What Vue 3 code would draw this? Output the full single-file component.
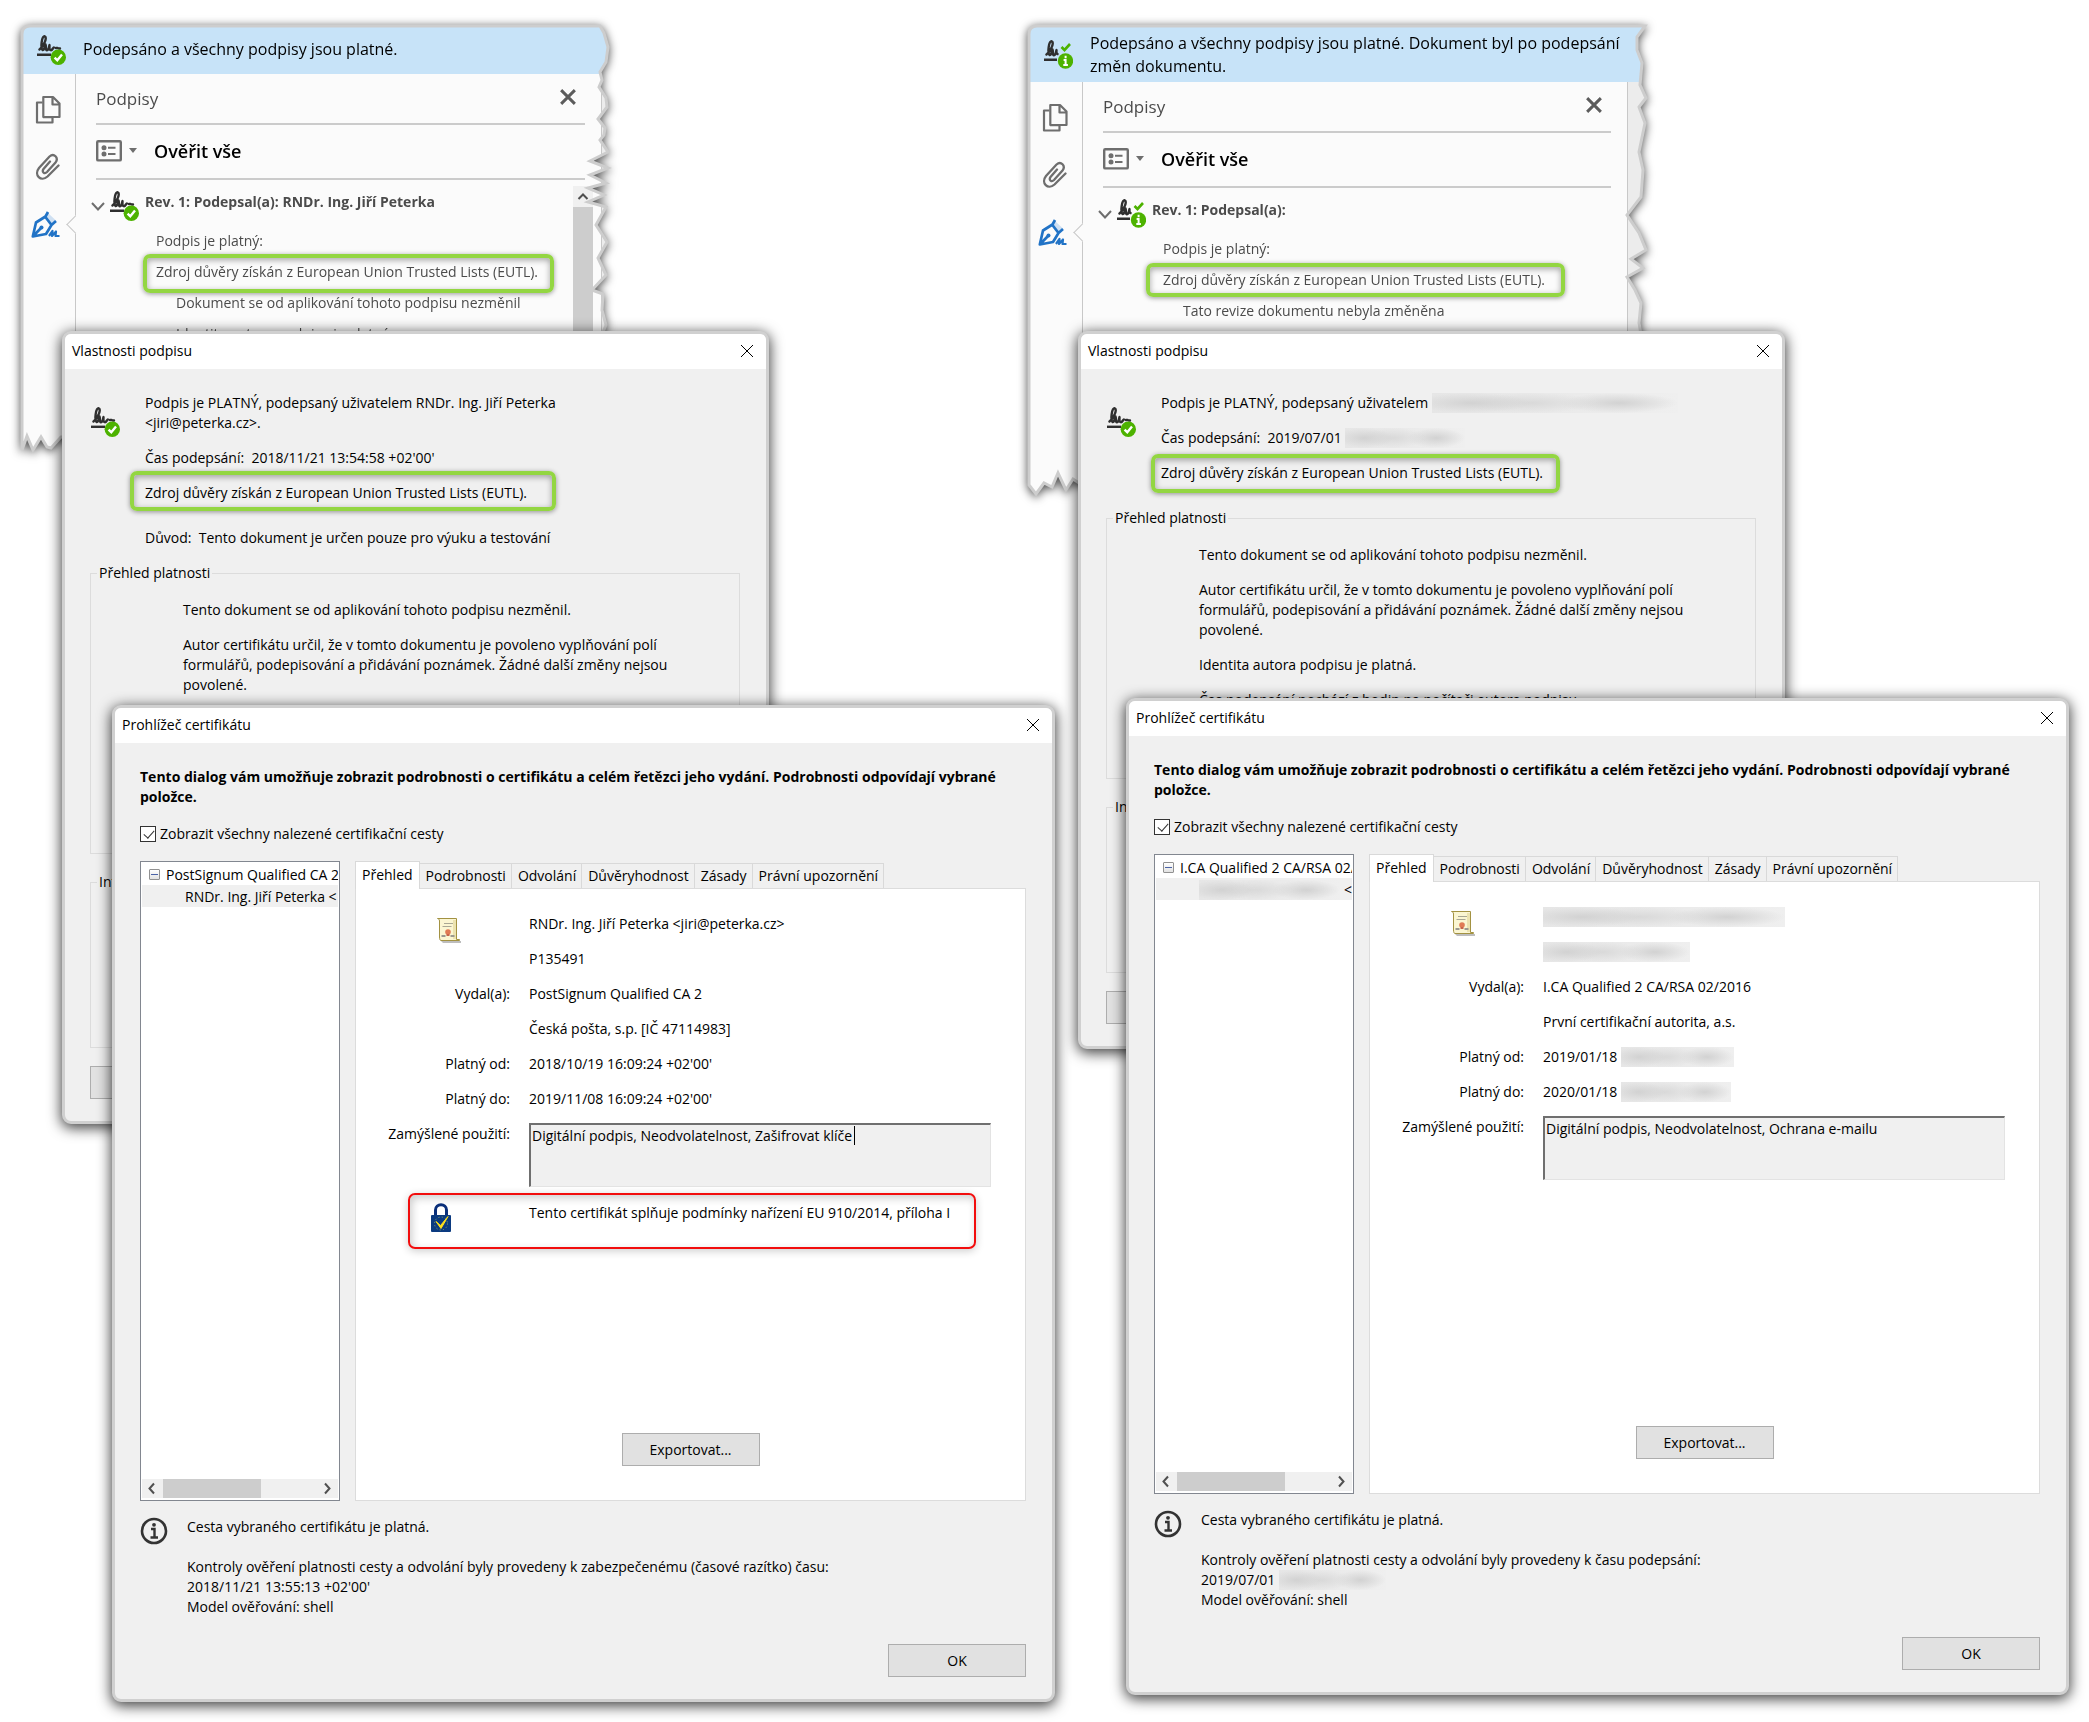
<template>
  <main class="desktop">
    <svg class="icon-defs" aria-hidden="true">
      <symbol id="ico-pen" viewBox="0 0 30 30">
        <path d="M3.500 14.500 C8 11 11.500 2 8.800 1.300 C5.500 1 4.500 13 6.500 15 C8 16 9 11 9.500 9.500 C10.500 11.500 9 15 11 15.200 C13 15 13 11 13.500 10 C13.500 12.500 13 15.200 15 15.200 C17 15 17 12 18 12.500 M20 13 h1.500 M23 13.500 h1" fill="none" stroke="#2f2f2f" stroke-width="2.400" stroke-linecap="round" stroke-linejoin="round" />
        <path d="M1 19.800 H15" stroke="#2f2f2f" stroke-width="2.400" />
      </symbol>
      <symbol id="ico-signed" viewBox="0 0 30 30">
        <use href="#ico-pen" width="30" height="30" />
        <circle cx="22.300" cy="22.300" r="7.700" fill="#4db200" />
        <path d="M18.600 22.600 L21.300 25.300 L26 19.600" fill="none" stroke="#fff" stroke-width="2.400" />
      </symbol>
      <symbol id="ico-signed-info" viewBox="0 0 30 30">
        <path d="M3.500 14.500 C8 11 11.500 2 8.800 1.300 C5.500 1 4.500 13 6.500 15 C8 16 9 11 9.500 9.500 C10.500 11.500 9 15 11 15.200 C13 15 13 11 13.500 10 C13.500 12 13 13.500 14.500 14" fill="none" stroke="#2f2f2f" stroke-width="2.400" stroke-linecap="round" stroke-linejoin="round" />
        <path d="M1 19.800 H14" stroke="#2f2f2f" stroke-width="2.400" />
        <path d="M18.500 7 L21.500 10 L27 4" fill="none" stroke="#4db200" stroke-width="2.600" />
        <circle cx="22.500" cy="21" r="7.700" fill="#4db200" />
        <path d="M22.600 15.800 v2.400 M20.600 20 h2 v5 M20.300 25 h4.600" fill="none" stroke="#fff" stroke-width="2" />
      </symbol>
      <symbol id="ico-pages" viewBox="0 0 26 30">
        <path d="M8 24 H17 V22 H8 Z" fill="#dadada" />
        <path d="M7.500 7.500 H2 V27.500 H17.500 V23" fill="none" stroke="#6e6e6e" stroke-width="2.200" stroke-linejoin="round" />
        <path d="M8.300 2 H18 L24.500 8.500 V22 H8.300 Z M17.500 2.500 V9.500 H24" fill="none" stroke="#6e6e6e" stroke-width="2.200" stroke-linejoin="round" />
      </symbol>
      <symbol id="ico-clip" viewBox="0 0 26 28">
        <path d="M15 8.500 L8.500 16 C6.500 19 9.500 21.500 12 19 L20.500 9.500 C24 5 19 -0.500 14.500 3.500 L4 15 C-1.500 22 6 29.500 12.500 23.500 L23.500 12.500" fill="none" stroke="#6e6e6e" stroke-width="2.300" stroke-linecap="round" />
      </symbol>
      <symbol id="ico-nib" viewBox="0 0 30 28">
        <path d="M17 2 L25 9.500 L21 13 L14 5 Z" fill="#cfe0f2" />
        <path d="M17 1 L14.500 5.500 L5 11.500 L1.800 25.500 L15 23 L20.500 14 L25 10 M14 5.500 L20.500 14 M1.800 25.500 L10 17" fill="none" stroke="#2173c6" stroke-width="2.700" stroke-linejoin="round" />
        <circle cx="10.500" cy="16.500" r="2" fill="#2173c6" />
        <path d="M18 25 L21.500 20 L21 25 L25 20.500 L24.500 25 H28.500" fill="none" stroke="#2173c6" stroke-width="2.200" stroke-linejoin="round" />
      </symbol>
      <symbol id="ico-list" viewBox="0 0 26 22">
        <rect x="1.200" y="1.200" width="23.600" height="19.200" rx="1" fill="none" stroke="#6e6e6e" stroke-width="2.400" />
        <circle cx="8" cy="7.700" r="2.500" fill="#6e6e6e" />
        <circle cx="8" cy="14" r="2.500" fill="#6e6e6e" />
        <path d="M12 7.700 h7.500 M12 14 h7.500" stroke="#6e6e6e" stroke-width="2" />
      </symbol>
      <symbol id="ico-close" viewBox="0 0 14 14">
        <path d="M1 1 L13 13 M13 1 L1 13" fill="none" stroke="currentColor" />
      </symbol>
      <symbol id="ico-cert" viewBox="0 0 26 28">
        <path d="M5 24 H25 V26 H7 Z" fill="#bdbdbd" />
        <path d="M1.500 1.500 H20.500 V22.500 H23.500 V23.500 H5 C4 23.500 3.500 22 3.500 20 V4 C3.500 2.500 2.500 1.500 1.500 1.500 Z" fill="#fbf6d2" stroke="#a39242" />
        <path d="M17 3 H20 V22 H17 Z" fill="#ece3b0" />
        <path d="M8 6.500 h9 M6.500 9.500 h9" stroke="#a9a794" />
        <path d="M5.500 19 h4 M14.500 19 h4" stroke="#9c9a90" stroke-width="2" />
        <circle cx="12" cy="15" r="2.800" fill="#e07b55" />
        <path d="M10.500 17 v2 h3 v-2" fill="#c8644a" />
      </symbol>
      <symbol id="ico-lock" viewBox="0 0 22 30">
        <path d="M5.500 12 V7 C5.500 0 16.500 0 16.500 7 V12" fill="none" stroke="#0a2f7a" stroke-width="3" />
        <rect x="1" y="12" width="20" height="17" rx="1" fill="#0b3a80" />
        <circle cx="11" cy="20.500" r="6.500" fill="none" stroke="#7f9a6a" stroke-dasharray="1.200 2.200" />
        <path d="M6 18.500 L10.500 22.500 L18 13.500 L11 25.500 Z" fill="#ffe11a" stroke="#ffe11a" />
      </symbol>
      <symbol id="ico-info" viewBox="0 0 28 28">
        <circle cx="14" cy="14" r="12" fill="none" stroke="#333" stroke-width="2.600" />
        <circle cx="14" cy="7.800" r="1.900" fill="#333" />
        <path d="M11 12 h3.500 v8.500 M10.500 20.500 h7.500" fill="none" stroke="#333" stroke-width="2.400" />
      </symbol>
    </svg>

    <template v-for="scene in scenes" :key="scene.id">
      <!-- panel podpisů s natrženým okrajem -->
      <section class="panel" :style="place(scene.panel)">
        <div class="panel-content" :style="{ clipPath: `path('${scene.panel.outline}')` }">
          <header class="banner" :class="{ tall: scene.panel.banner.length > 1 }">
            <svg class="ico-sign"><use :href="scene.panel.icon" /></svg>
            <p><span v-for="line in scene.panel.banner" :key="line">{{ line }}</span></p>
          </header>
          <div class="panel-main">
            <nav class="rail">
              <button type="button" aria-label="Stránky"><svg width="26" height="30"><use href="#ico-pages" /></svg></button>
              <button type="button" aria-label="Přílohy"><svg width="26" height="28"><use href="#ico-clip" /></svg></button>
              <button type="button" aria-label="Podpisy" class="active"><svg width="30" height="28"><use href="#ico-nib" /></svg></button>
            </nav>
            <div class="signatures" :style="{ width: scene.panel.bodyWidth + 'px' }">
              <div class="sig-head">
                <h2>Podpisy</h2>
                <button type="button" aria-label="Zavřít"><svg width="16" height="16"><use href="#ico-close" stroke-width="2.600" /></svg></button>
              </div>
              <div class="sig-tools">
                <button type="button" class="list-btn" aria-label="Možnosti">
                  <svg width="26" height="22"><use href="#ico-list" /></svg><i class="caret"></i>
                </button>
                <button type="button" class="verify">Ověřit vše</button>
              </div>
              <div class="revision">
                <svg class="chevron" width="14" height="9" viewBox="0 0 14 9"><path d="M1 1 L7 7.500 L13 1" fill="none" stroke="#6e6e6e" stroke-width="2" /></svg>
                <svg class="ico-sign"><use :href="scene.panel.icon" /></svg>
                <strong>{{ scene.panel.revision }}</strong>
              </div>
              <p class="sig-line">Podpis je platný:</p>
              <p class="sig-line marked">{{ trustText }}<i class="mark" :style="place(scene.panel.mark)"></i></p>
              <p v-for="line in scene.panel.details" :key="line" class="sig-line nested">{{ line }}</p>
              <div v-if="scene.panel.scrollbar" class="vscroll">
                <svg width="20" height="21" viewBox="0 0 20 21"><path d="M5.500 13 L10 8.500 L14.500 13" fill="none" stroke="#505050" stroke-width="2" /></svg>
              </div>
            </div>
            <div class="splitter"></div>
          </div>
        </div>
        <svg class="outline"><path :d="scene.panel.outline" /></svg>
      </section>

      <!-- vlastnosti podpisu -->
      <section class="window" :style="place(scene.props)">
        <header class="titlebar">
          <h2>Vlastnosti podpisu</h2>
          <button type="button" aria-label="Zavřít"><svg width="14" height="14"><use href="#ico-close" /></svg></button>
        </header>
        <div class="window-body">
          <div class="summary">
            <svg class="ico-sign"><use href="#ico-signed" /></svg>
            <div>
              <p>Podpis je PLATNÝ, podepsaný uživatelem <template v-if="scene.props.user">{{ scene.props.user }}<br />{{ scene.props.mail }}</template><i v-else class="smudge" style="width: 246px"></i></p>
              <p>Čas podepsání:&nbsp; {{ scene.props.time }} <i v-if="!scene.props.user" class="smudge" style="width: 120px"></i></p>
              <p class="marked trust">{{ trustText }}<i class="mark" :style="place(scene.props.mark)"></i></p>
              <p v-if="scene.props.reason">Důvod:&nbsp; {{ scene.props.reason }}</p>
            </div>
          </div>
          <fieldset class="overview">
            <legend>Přehled platnosti</legend>
            <p v-for="line in scene.props.overview" :key="line">{{ line }}</p>
          </fieldset>
          <fieldset class="signer">
            <legend>Informace</legend>
          </fieldset>
          <button type="button" class="btn details">Detaily podpisu...</button>
        </div>
      </section>

      <!-- prohlížeč certifikátu -->
      <section class="window" :style="place(scene.viewer)">
        <header class="titlebar">
          <h2>Prohlížeč certifikátu</h2>
          <button type="button" aria-label="Zavřít"><svg width="14" height="14"><use href="#ico-close" /></svg></button>
        </header>
        <div class="window-body">
          <p class="intro">Tento dialog vám umožňuje zobrazit podrobnosti o certifikátu a celém řetězci jeho vydání. Podrobnosti odpovídají vybrané položce.</p>
          <label class="check"><input v-model="scene.showAll" type="checkbox" />Zobrazit všechny nalezené certifikační cesty</label>

          <div class="columns">
            <div class="tree">
              <div class="tree-row"><i class="minus"></i>{{ scene.viewer.root }}</div>
              <div class="tree-row selected">
                <template v-if="scene.viewer.leaf">{{ scene.viewer.leaf }}</template>
                <i v-else class="smudge" style="width: 148px"></i>&nbsp;&lt;
              </div>
              <div class="hscroll">
                <svg width="21" height="19" viewBox="0 0 21 19"><path d="M12 4.500 L7.500 9.500 L12 14.500" fill="none" stroke="#505050" stroke-width="2" /></svg>
                <i class="thumb" :style="{ width: scene.viewer.thumb + 'px' }"></i>
                <svg width="21" height="19" viewBox="0 0 21 19"><path d="M8 4.500 L12.500 9.500 L8 14.500" fill="none" stroke="#505050" stroke-width="2" /></svg>
              </div>
            </div>

            <div class="tabs">
              <div class="tablist" role="tablist">
                <button v-for="tab in tabs" :key="tab" type="button" role="tab" :class="{ active: tab === scene.tab }" @click="scene.tab = tab">{{ tab }}</button>
              </div>
              <div class="tabpanel" role="tabpanel">
                <dl>
                  <template v-for="(row, i) in scene.viewer.rows" :key="i">
                    <dt><svg v-if="i === 0" class="ico-cert"><use href="#ico-cert" /></svg>{{ row.label }}</dt>
                    <dd>{{ row.value }} <i v-if="row.smudge" class="smudge" :style="{ width: row.smudge + 'px' }"></i></dd>
                  </template>
                  <dt><label :for="'usage-' + scene.id">Zamýšlené použití:</label></dt>
                  <dd class="usage">
                    <textarea :id="'usage-' + scene.id" readonly :value="scene.viewer.usage"></textarea>
                    <i v-if="scene.viewer.cursor" class="cursor" :style="{ left: scene.viewer.cursor + 'px' }"></i>
                  </dd>
                </dl>
                <div v-if="scene.viewer.qualified" class="qualified">
                  <svg width="22" height="30"><use href="#ico-lock" /></svg>
                  <span>{{ scene.viewer.qualified }}</span>
                </div>
                <button type="button" class="btn export">Exportovat...</button>
              </div>
            </div>
          </div>

          <div class="status">
            <svg width="28" height="28"><use href="#ico-info" /></svg>
            <div>
              <p>Cesta vybraného certifikátu je platná.</p>
              <p>{{ scene.viewer.check }}<br />{{ scene.viewer.checkTime }} <i v-if="!scene.viewer.leaf" class="smudge" style="width: 107px"></i><br />Model ověřování: shell</p>
            </div>
          </div>
          <button type="button" class="btn ok">OK</button>
        </div>
      </section>
    </template>
  </main>
</template>

<script setup>
import { reactive } from 'vue';

const trustText = 'Zdroj důvěry získán z European Union Trusted Lists (EUTL).';
const tabs = ['Přehled', 'Podrobnosti', 'Odvolání', 'Důvěryhodnost', 'Zásady', 'Právní upozornění'];

const unchanged = 'Tento dokument se od aplikování tohoto podpisu nezměnil.';
const allowed = 'Autor certifikátu určil, že v tomto dokumentu je povoleno vyplňování polí formulářů, podepisování a přidávání poznámek. Žádné další změny nejsou povolené.';

const scenes = reactive([
  {
    id: 'left',
    showAll: true,
    tab: 'Přehled',
    panel: {
      left: 20, top: 24, width: 592, height: 432,
      bodyWidth: 489,
      icon: '#ico-signed',
      banner: ['Podepsáno a všechny podpisy jsou platné.'],
      revision: 'Rev. 1: Podepsal(a): RNDr. Ing. Jiří Peterka',
      details: ['Dokument se od aplikování tohoto podpisu nezměnil', 'Identita autora podpisu je platná'],
      scrollbar: true,
      mark: { left: -13, top: -8, width: 411, height: 39 },
      outline: 'M2 10 Q2 2 10 2 L580 2 L584 9 L588 23 L586 38 L580 48 L582 56 L579 63 L586 74 L587 83 L578 95 L585 104 L584 111 L580 116 L588 128 L570 137 L588 144 L570 151 L586 159 L568 164 L584 171 L568 178 L586 183 L576 201 L587 218 L578 234 L586 251 L572 266 L583 270 L582 286 L586 301 L580 316 L580 410 L41 413 L31 424 L27 423 L21 413 L13 426 L7 412 L2 426 Z'
    },
    props: {
      left: 62, top: 331, width: 707, height: 793,
      user: 'RNDr. Ing. Jiří Peterka',
      mail: '<jiri@peterka.cz>.',
      time: "2018/11/21 13:54:58 +02'00'",
      reason: 'Tento dokument je určen pouze pro výuku a testování',
      overview: [unchanged, allowed],
      mark: { left: -15, top: -12, width: 426, height: 40 }
    },
    viewer: {
      left: 112, top: 705, width: 943, height: 997,
      root: 'PostSignum Qualified CA 2',
      leaf: 'RNDr. Ing. Jiří Peterka',
      thumb: 98,
      rows: [
        { value: 'RNDr. Ing. Jiří Peterka <jiri@peterka.cz>' },
        { value: 'P135491' },
        { label: 'Vydal(a):', value: 'PostSignum Qualified CA 2' },
        { value: 'Česká pošta, s.p. [IČ 47114983]' },
        { label: 'Platný od:', value: "2018/10/19 16:09:24 +02'00'" },
        { label: 'Platný do:', value: "2019/11/08 16:09:24 +02'00'" }
      ],
      usage: 'Digitální podpis, Neodvolatelnost, Zašifrovat klíče',
      cursor: 325,
      qualified: 'Tento certifikát splňuje podmínky nařízení EU 910/2014, příloha I',
      check: 'Kontroly ověření platnosti cesty a odvolání byly provedeny k zabezpečenému (časové razítko) času:',
      checkTime: "2018/11/21 13:55:13 +02'00'"
    }
  },
  {
    id: 'right',
    showAll: true,
    tab: 'Přehled',
    panel: {
      left: 1027, top: 24, width: 624, height: 476,
      bodyWidth: 508,
      icon: '#ico-signed-info',
      banner: ['Podepsáno a všechny podpisy jsou platné. Dokument byl po podepsání', 'změn dokumentu.'],
      revision: 'Rev. 1: Podepsal(a):',
      details: ['Tato revize dokumentu nebyla změněna'],
      mark: { left: -17, top: -7, width: 419, height: 34 },
      outline: 'M2 10 Q2 2 10 2 L618 2 L610 13 L610 26 L615 39 L613 61 L619 74 L612 83 L618 99 L612 128 L616 146 L614 173 L600 191 L612 209 L619 226 L604 235 L616 244 L600 253 L608 266 L614 279 L612 299 L615 316 L614 450 L52 459 L46 455 L39 466 L31 449 L25 463 L17 459 L9 470 L2 461 Z'
    },
    props: {
      left: 1078, top: 331, width: 707, height: 718,
      time: '2019/07/01',
      overview: [unchanged, allowed, 'Identita autora podpisu je platná.', 'Čas podepsání pochází z hodin na počítači autora podpisu.'],
      mark: { left: -10, top: -9, width: 409, height: 39 }
    },
    viewer: {
      left: 1126, top: 698, width: 943, height: 997,
      root: 'I.CA Qualified 2 CA/RSA 02/2016',
      thumb: 108,
      rows: [
        { smudge: 242 },
        { smudge: 147 },
        { label: 'Vydal(a):', value: 'I.CA Qualified 2 CA/RSA 02/2016' },
        { value: 'První certifikační autorita, a.s.' },
        { label: 'Platný od:', value: '2019/01/18', smudge: 113 },
        { label: 'Platný do:', value: '2020/01/18', smudge: 110 }
      ],
      usage: 'Digitální podpis, Neodvolatelnost, Ochrana e-mailu',
      check: 'Kontroly ověření platnosti cesty a odvolání byly provedeny k času podepsání:',
      checkTime: '2019/07/01'
    }
  }
]);

const place = ({ left, top, width, height }) => ({
  left: left + 'px',
  top: top + 'px',
  width: width + 'px',
  height: height + 'px'
});
</script>

<style>
body {
  margin: 0;
  background: #fff;
}
</style>

<style scoped>
.desktop {
  position: relative;
  min-height: 100vh;
  overflow: hidden;
  font-family: "Open Sans", "Noto Sans", sans-serif;
  font-size: 14px;
  line-height: 20px;
  color: #000;
}

.desktop * {
  box-sizing: border-box;
}

p,
h2,
dl,
dd {
  margin: 0;
}

h2 {
  font-weight: 400;
}

svg {
  display: block;
  flex: none;
}

button {
  padding: 0;
  border: 0;
  background: none;
  font: inherit;
  color: inherit;
}

.icon-defs {
  position: absolute;
  width: 0;
  height: 0;
}

.ico-sign {
  width: 30px;
  height: 30px;
}

.marked {
  position: relative;
}

.mark {
  position: absolute;
  border: 4px solid #93d642;
  border-radius: 7px;
  box-shadow: 0 1px 5px rgba(0, 0, 0, 0.4), inset 0 2px 6px rgba(0, 0, 0, 0.35);
}

/* rozmazané osobní údaje */
.smudge {
  display: inline-block;
  height: 20px;
  vertical-align: top;
  background:
    radial-gradient(ellipse 24% 50% at 16% 50%, #d2d2d2, transparent),
    radial-gradient(ellipse 28% 50% at 40% 50%, #d9d9d9, transparent),
    radial-gradient(ellipse 24% 50% at 76% 50%, #d2d2d2, transparent),
    linear-gradient(90deg, #e6e6e6, #ebebeb 60%, #efefef);
}

/* panel podpisů */
.panel {
  position: absolute;
  filter: drop-shadow(0 2px 5px rgba(0, 0, 0, 0.7));
}

.panel-content {
  display: flex;
  flex-direction: column;
  height: 100%;
  padding: 3px;
  background: #fbfbfb;
}

.outline {
  position: absolute;
  inset: 0;
  width: 100%;
  height: 100%;
}

.outline path {
  fill: none;
  stroke: #cdcdcd;
  stroke-width: 3px;
}

.banner {
  display: flex;
  align-items: center;
  gap: 17px;
  flex: none;
  height: 47px;
  padding: 0 0 2px 13px;
  background: #c7e3f8;
  font-size: 16px;
  line-height: 23px;
}

.banner.tall {
  height: 55px;
  padding-bottom: 0;
}

.banner span {
  display: block;
  white-space: nowrap;
}

.panel-main {
  display: flex;
  flex: 1;
}

.rail {
  display: flex;
  flex-direction: column;
  gap: 28px;
  width: 53px;
  padding: 21px 0 0 12px;
  border-right: 1px solid #c8c8c8;
}

.rail button {
  position: relative;
  width: 30px;
}

.rail .active {
  width: 34px;
  margin: 2px 0 0 -4px;
}

.rail .active::after {
  content: "";
  position: absolute;
  top: 7px;
  right: -17px;
  width: 12px;
  height: 12px;
  border-left: 1px solid #c8c8c8;
  border-bottom: 1px solid #c8c8c8;
  background: #fbfbfb;
  transform: rotate(45deg);
}

.signatures {
  position: relative;
  flex: none;
  margin-left: 20px;
  color: #4b4b4b;
}

.sig-head {
  display: flex;
  align-items: center;
  justify-content: space-between;
  height: 51px;
  padding-right: 9px;
  border-bottom: 2px solid #cbcbcb;
}

.sig-head h2 {
  font-size: 17px;
}

.sig-head button {
  padding-bottom: 4px;
  color: #5c5c5c;
}

.sig-tools {
  display: flex;
  align-items: center;
  gap: 17px;
  height: 55px;
  padding-bottom: 2px;
  border-bottom: 2px solid #cbcbcb;
}

.list-btn {
  display: flex;
  align-items: center;
  gap: 7px;
}

.caret {
  border: 4px solid transparent;
  border-top: 5px solid #6e6e6e;
  border-bottom: 0;
}

.verify {
  font-size: 18px;
  font-weight: 600;
  color: #000;
}

.revision {
  display: flex;
  height: 51px;
  padding-top: 11px;
}

.revision .chevron {
  margin: 11px 4px 0 -5px;
}

.revision strong {
  margin: 1px 0 0 6px;
  white-space: nowrap;
}

.sig-line {
  margin: 0 0 11px 60px;
  white-space: nowrap;
}

.sig-line.nested {
  margin-left: 80px;
}

.vscroll {
  position: absolute;
  top: 112px;
  right: -8px;
  bottom: 0;
  width: 20px;
  background: linear-gradient(#f0f0f0 21px, #cdcdcd 21px);
}

.splitter {
  flex: 1;
  margin-left: 16px;
  border-left: 1px solid #c8c8c8;
  background: #ececec;
}

/* dialogová okna */
.window {
  position: absolute;
  display: flex;
  flex-direction: column;
  border: 3px solid #d0d0d0;
  border-radius: 9px;
  background: #f0f0f0;
  box-shadow: 0 3px 14px 1px rgba(0, 0, 0, 0.75);
}

.titlebar {
  display: flex;
  align-items: center;
  justify-content: space-between;
  flex: none;
  height: 35px;
  padding: 0 12px 2px 7px;
  border-radius: 6px 6px 0 0;
  background: #fff;
}

.titlebar h2 {
  font-size: 14px;
}

.window-body {
  display: flex;
  flex-direction: column;
  flex: 1;
  padding: 24px 26px 22px 25px;
}

.btn {
  width: 138px;
  height: 33px;
  border: 1px solid #adadad;
  background: #e1e1e1;
}

.btn.details {
  width: 156px;
}

.summary {
  display: flex;
  gap: 25px;
}

.summary .ico-sign {
  margin-top: 14px;
}

.summary p {
  margin-bottom: 15px;
}

.summary .trust {
  margin-bottom: 25px;
}

fieldset {
  margin: 0;
  border: 1px solid #dcdcdc;
}

legend {
  margin-left: 6px;
  padding: 0 2px;
}

.overview {
  flex: 1;
  padding: 17px 60px 0 92px;
}

.overview legend {
  margin-left: -86px;
}

.overview p {
  margin-bottom: 15px;
}

.signer {
  height: 176px;
  margin: 18px 0;
  padding: 0;
}

.intro {
  font-weight: 700;
}

.check {
  display: flex;
  align-items: center;
  gap: 4px;
  margin: 17px 0;
}

.check input {
  appearance: none;
  width: 16px;
  height: 16px;
  margin: 0;
  border: 1px solid #333;
  background: #fff;
}

.check input:checked::after {
  content: "";
  display: block;
  width: 5px;
  height: 9px;
  margin: 1px 0 0 5px;
  border: solid #333;
  border-width: 0 1px 1px 0;
  transform: rotate(42deg);
}

.columns {
  display: flex;
  flex: 1;
  gap: 15px;
}

.tree {
  display: flex;
  flex-direction: column;
  flex: none;
  width: 200px;
  padding: 1px;
  border: 1px solid #828790;
  background: #fff;
}

.tree-row {
  display: flex;
  align-items: center;
  flex: none;
  height: 22px;
  padding: 1px 0 0 7px;
  overflow: hidden;
  white-space: nowrap;
}

.tree-row.selected {
  padding-left: 43px;
  background: #f0f0f0;
}

.minus {
  flex: none;
  width: 11px;
  height: 11px;
  margin-right: 6px;
  border: 1px solid #919191;
  border-radius: 1px;
  background: linear-gradient(#4b63a7, #4b63a7) center / 7px 1px no-repeat, linear-gradient(#fff, #e2e2e2);
}

.hscroll {
  display: flex;
  height: 19px;
  margin: auto 0 1px;
  background: #f0f0f0;
}

.thumb {
  margin-right: auto;
  background: #cdcdcd;
}

.tabs {
  display: flex;
  flex-direction: column;
  flex: 1;
}

.tablist {
  display: flex;
  align-items: flex-end;
  height: 27px;
}

.tablist button {
  height: 25px;
  padding: 0 5px 0 6px;
  border: 1px solid #d9d9d9;
  border-width: 1px 1px 0 0;
}

.tablist .active {
  position: relative;
  height: 28px;
  margin-bottom: -1px;
  padding: 0 6px 1px;
  border-left-width: 1px;
  background: #fff;
}

.tabpanel {
  display: flex;
  flex-direction: column;
  flex: 1;
  padding: 17px 0 34px;
  border: 1px solid #dcdcdc;
  background: #fff;
}

dl {
  display: grid;
  grid-template-columns: 154px 1fr;
  grid-auto-rows: minmax(35px, auto);
  column-gap: 19px;
  padding-right: 34px;
  line-height: 35px;
}

dt {
  height: 35px;
  text-align: right;
}

dd .smudge {
  margin-top: 8px;
}

.ico-cert {
  width: 26px;
  height: 28px;
  margin: 11px 0 0 80px;
}

.usage {
  position: relative;
  padding-top: 7px;
}

.cursor {
  position: absolute;
  top: 10px;
  width: 1px;
  height: 19px;
  background: #000;
}

textarea {
  display: block;
  width: 100%;
  height: 64px;
  padding: 1px;
  border: 2px solid #6f6f6f;
  border-right: 1px solid #e3e3e3;
  border-bottom: 1px solid #e3e3e3;
  background: #f0f0f0;
  font: inherit;
  line-height: 20px;
  resize: none;
}

.qualified {
  display: flex;
  gap: 77px;
  height: 56px;
  margin: 6px 49px 0 52px;
  padding: 8px 0 0 20px;
  border: 2px solid #f20d0d;
  border-radius: 7px;
  box-shadow: 0 2px 8px rgba(0, 0, 0, 0.2), inset 2px 3px 8px rgba(0, 0, 0, 0.2);
}

.export {
  margin: auto auto 0;
}

.status {
  display: flex;
  gap: 19px;
  min-height: 100px;
  margin: 16px 0 27px;
}

.status p {
  margin-bottom: 20px;
}

.status p:last-child {
  margin-bottom: 0;
}

.ok {
  flex: none;
  margin-left: auto;
}
</style>
